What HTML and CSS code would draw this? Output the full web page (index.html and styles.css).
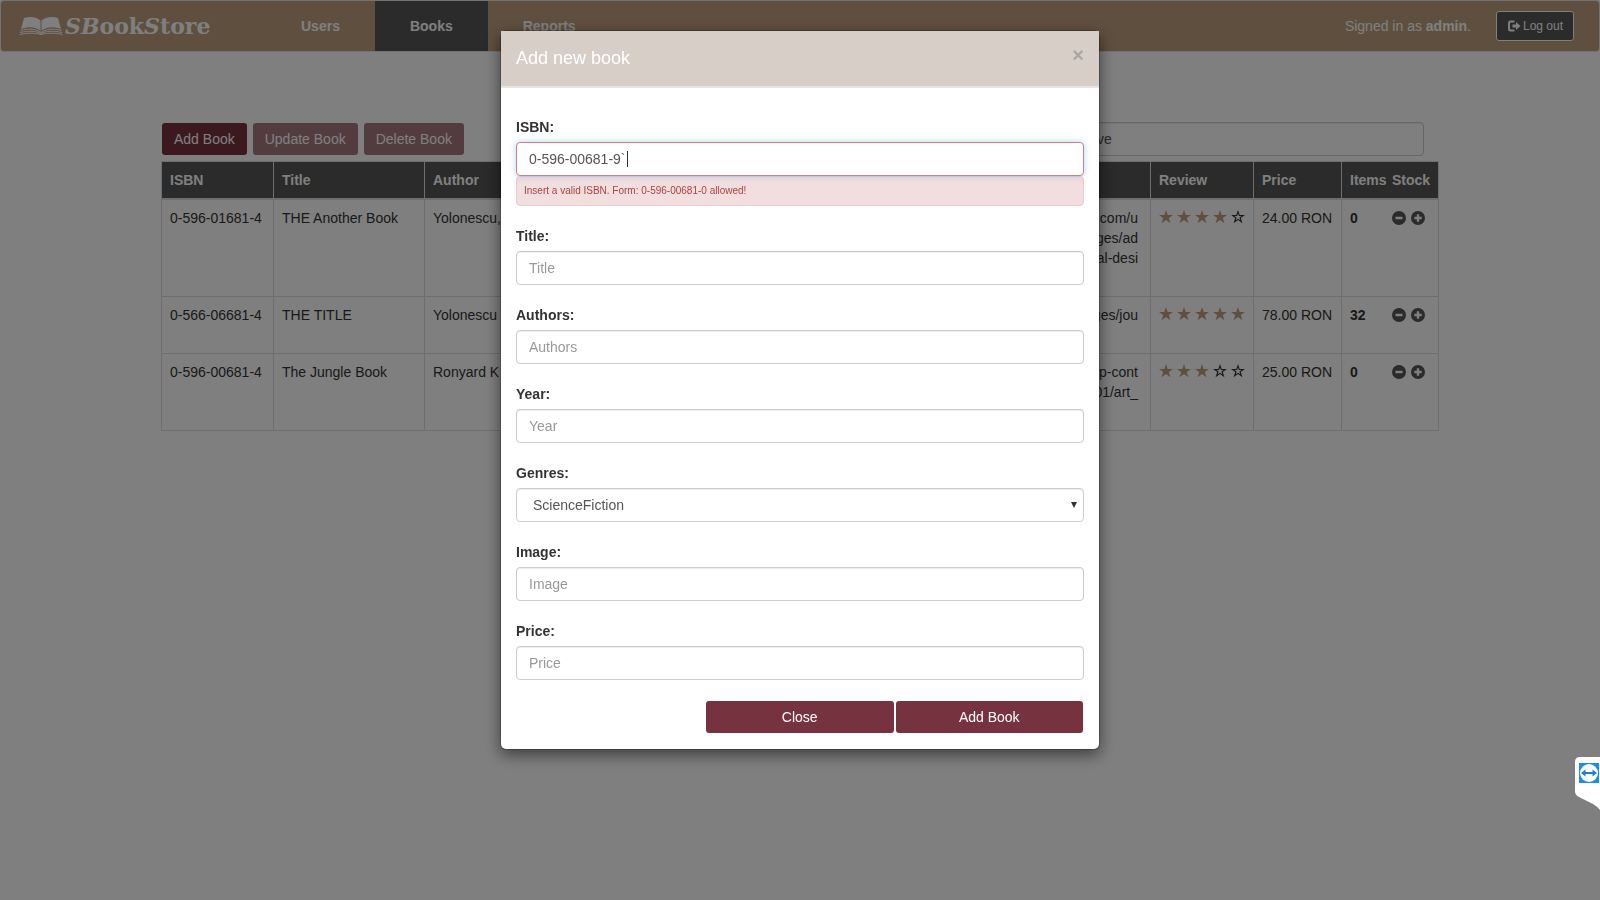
FILE: index.html
```html
<!DOCTYPE html>
<html lang="en">
<head>
<meta charset="utf-8">
<title>SBookStore</title>
<link rel="stylesheet" href="styles.css">
</head>
<body>
<svg class="defs" aria-hidden="true">
  <symbol id="star" viewBox="0 0 14 14"><path d="M7 0 8.700 4.900H14L9.800 8 11.400 13.200 7 10.100 2.600 13.200 4.200 8 0 4.900H5.300Z"/></symbol>
  <symbol id="star-empty" viewBox="0 0 14 14"><path fill-rule="evenodd" d="M7 0 8.700 4.900H14L9.800 8 11.400 13.200 7 10.100 2.600 13.200 4.200 8 0 4.900H5.300ZM7 3.400 6.100 6H3.400L5.600 7.600 4.800 10.300 7 8.700 9.200 10.300 8.400 7.600 10.600 6H7.900Z"/></symbol>
  <symbol id="minus" viewBox="0 0 14 14"><path fill-rule="evenodd" d="M7 0a7 7 0 1 0 0 14A7 7 0 0 0 7 0ZM3.5 5.7H10.5V8.3H3.5Z"/></symbol>
  <symbol id="plus" viewBox="0 0 14 14"><path fill-rule="evenodd" d="M7 0a7 7 0 1 0 0 14A7 7 0 0 0 7 0ZM5.8 3.3H8.2V5.8H10.7V8.2H8.2V10.7H5.8V8.2H3.3V5.8H5.8Z"/></symbol>
</svg>
<header class="navbar">
  <a class="brand" href="#">
    <svg class="brand-book" viewBox="0 0 44 20" aria-hidden="true">
      <path fill="#fff" d="M5 2C11 0 18 1 22 5 26 1 33 0 39 2L42 13C34 10 27 11 22 15 17 11 10 10 2 13Z"/>
      <path fill="none" stroke="#fff" stroke-width="1" d="M1.500 14.500C10 12 17 13 22 16.500 27 13 34 12 42.500 14.500M1 16.500C10 14.500 17 15 22 17.500 27 15 34 14.500 43 16.500M.5 18.500C9 16.500 17 17 22 18.500 27 17 35 16.500 43.500 18.500"/>
      <path stroke="#bf9f7f" stroke-width="1" d="M22 5V15"/>
    </svg>
    <span class="brand-name"><em>SB</em>ook<em>S</em>tore</span>
  </a>
  <nav class="tabs">
    <a class="tab" href="#">Users</a>
    <a class="tab active" href="#">Books</a>
    <a class="tab" href="#">Reports</a>
  </nav>
  <p class="signed">Signed in as <b>admin</b>.</p>
  <button class="logout" type="button">
    <svg viewBox="0 0 13 12" aria-hidden="true"><path fill="#fff" d="M7 .5H3Q.5.500.5 3V9Q.5 11.500 3 11.500H7V9.500H3.300Q2.500 9.500 2.500 8.700V3.300Q2.500 2.500 3.300 2.500H7ZM8.500 2 13 6 8.500 10V7.500H5V4.500H8.500Z"/></svg>
    <span>Log out</span>
  </button>
</header>

<main class="page">
  <div class="toolbar">
    <button class="btn" type="button">Add Book</button>
    <button class="btn" type="button" disabled>Update Book</button>
    <button class="btn" type="button" disabled>Delete Book</button>
    <input class="control search" type="text" value="ve" aria-label="Search">
  </div>
  <table class="books">
    <colgroup><col class="c-isbn"><col class="c-title"><col class="c-author"><col><col class="c-review"><col class="c-price"><col class="c-stock"></colgroup>
    <thead>
      <tr><th>ISBN</th><th>Title</th><th>Author</th><th></th><th>Review</th><th>Price</th><th><span class="stock"><span class="count">Items</span>Stock</span></th></tr>
    </thead>
    <tbody>
      <tr class="tall">
        <td>0-596-01681-4</td><td>THE Another Book</td><td>Yolonescu,</td><td class="url">.com/u<br>ges/ad<br>al-desi</td>
        <td><span class="stars" role="img" aria-label="4 of 5"><svg><use href="#star"/></svg><svg><use href="#star"/></svg><svg><use href="#star"/></svg><svg><use href="#star"/></svg><svg class="empty"><use href="#star-empty"/></svg></span></td>
        <td>24.00 RON</td>
        <td><span class="stock"><b class="count">0</b><button type="button" aria-label="Remove one"><svg><use href="#minus"/></svg></button><button type="button" aria-label="Add one"><svg><use href="#plus"/></svg></button></span></td>
      </tr>
      <tr class="short">
        <td>0-566-06681-4</td><td>THE TITLE</td><td>Yolonescu</td><td class="url">ges/jou</td>
        <td><span class="stars" role="img" aria-label="5 of 5"><svg><use href="#star"/></svg><svg><use href="#star"/></svg><svg><use href="#star"/></svg><svg><use href="#star"/></svg><svg><use href="#star"/></svg></span></td>
        <td>78.00 RON</td>
        <td><span class="stock"><b class="count">32</b><button type="button" aria-label="Remove one"><svg><use href="#minus"/></svg></button><button type="button" aria-label="Add one"><svg><use href="#plus"/></svg></button></span></td>
      </tr>
      <tr class="medium">
        <td>0-596-00681-4</td><td>The Jungle Book</td><td>Ronyard K</td><td class="url">wp-cont<br>01/art_</td>
        <td><span class="stars" role="img" aria-label="3 of 5"><svg><use href="#star"/></svg><svg><use href="#star"/></svg><svg><use href="#star"/></svg><svg class="empty"><use href="#star-empty"/></svg><svg class="empty"><use href="#star-empty"/></svg></span></td>
        <td>25.00 RON</td>
        <td><span class="stock"><b class="count">0</b><button type="button" aria-label="Remove one"><svg><use href="#minus"/></svg></button><button type="button" aria-label="Add one"><svg><use href="#plus"/></svg></button></span></td>
      </tr>
    </tbody>
  </table>
</main>

<div class="backdrop">
  <section class="modal" role="dialog" aria-labelledby="modal-title">
    <header class="modal-header">
      <h4 id="modal-title">Add new book</h4>
      <button class="close" type="button" aria-label="Close dialog">×</button>
    </header>
    <form class="modal-body">
      <div class="group">
        <label for="isbn">ISBN:</label>
        <div class="typed"><input class="control invalid" id="isbn" type="text" value="0-596-00681-9`"><span class="caret"></span></div>
        <p class="error">Insert a valid ISBN. Form: 0-596-00681-0 allowed!</p>
      </div>
      <div class="group"><label for="title">Title:</label><input class="control" id="title" type="text" placeholder="Title"></div>
      <div class="group"><label for="authors">Authors:</label><input class="control" id="authors" type="text" placeholder="Authors"></div>
      <div class="group"><label for="year">Year:</label><input class="control" id="year" type="text" placeholder="Year"></div>
      <div class="group"><label for="genres">Genres:</label>
        <div class="picker"><select class="control" id="genres"><option>ScienceFiction</option></select><svg viewBox="0 0 6 6" aria-hidden="true"><path d="M0 0H6L3 6Z"/></svg></div>
      </div>
      <div class="group"><label for="image">Image:</label><input class="control" id="image" type="text" placeholder="Image"></div>
      <div class="group"><label for="price">Price:</label><input class="control" id="price" type="text" placeholder="Price"></div>
      <div class="actions"><button class="btn" type="button">Close</button><button class="btn" type="button">Add Book</button></div>
    </form>
  </section>
</div>

<aside class="side-tab">
  <svg viewBox="0 0 25 54" aria-hidden="true">
    <path fill="#fff" d="M25 0H5Q0 0 0 5V34Q0 38 4 40L18 47Q23 50 25 53Z"/>
    <rect x="4" y="6" width="20" height="20" fill="#1a8cf0"/>
    <circle cx="14" cy="16" r="9" fill="#fff"/>
    <path fill="#1a7fe0" d="M6 16 10.500 12.500V15H17.500V12.500L22 16 17.500 19.500V17H10.500V19.500Z"/>
  </svg>
</aside>
</body>
</html>
```
FILE: styles.css
```css
* { box-sizing: border-box; }
body {
  margin: 0;
  background: #fff;
  color: #333;
  font: 14px/20px "Liberation Sans", Arial, sans-serif;
}
button, input, select { font: inherit; }
button { cursor: pointer; }
.defs { display: none; }

.navbar {
  display: flex;
  align-items: center;
  min-height: 52px;
  padding: 0 25px 0 18px;
  border: 1px solid #e7e7e7;
  border-radius: 4px;
  background: #bf9f7f;
  color: #fff;
}
.brand {
  display: flex;
  align-items: center;
  gap: 2px;
  width: 247px;
  color: #fff;
  text-decoration: none;
}
.brand-book { width: 44px; height: 20px; }
.brand-name { font: bold 22px/30px "DejaVu Serif", serif; }
.tabs { display: flex; flex: 1; }
.tab {
  padding: 15px 35px;
  color: #fff;
  font-weight: bold;
  text-decoration: none;
}
.tab.active { background: #565656; }
.signed { margin: 0 25px 0 0; }
.logout {
  display: flex;
  align-items: center;
  gap: 2px;
  height: 30px;
  padding: 0 10px;
  border: 1px solid #fff;
  border-radius: 3px;
  background: #565656;
  color: #fff;
  font-size: 12px;
}
.logout svg { width: 14px; height: 12px; }

.page { padding: 70px 161px 0; }
.toolbar {
  display: flex;
  align-items: center;
  gap: 6px;
  padding: 0 15px 5px 1px;
}
.btn {
  height: 32px;
  padding: 0 12px;
  border: 0;
  border-radius: 3px;
  background: #77323f;
  color: #fff;
}
.btn:disabled { opacity: .65; }
.control {
  display: block;
  width: 100%;
  height: 34px;
  padding: 6px 12px;
  border: 1px solid #ccc;
  border-radius: 4px;
  background: #fff;
  box-shadow: inset 0 1px 1px rgba(0, 0, 0, .075);
  color: #555;
  outline: 0;
}
.control::placeholder { color: #999; }
.search { width: 340px; margin-left: auto; }

.books {
  width: 100%;
  border-collapse: collapse;
  table-layout: fixed;
}
.books th, .books td {
  padding: 8px;
  border: 1px solid #ddd;
  text-align: left;
  vertical-align: top;
}
.books th {
  border-bottom-width: 2px;
  background: #565656;
  color: #fff;
}
.c-isbn { width: 112px; }
.c-title { width: 151px; }
.c-author { width: 150px; }
.c-review { width: 103px; }
.c-price { width: 88px; }
.c-stock { width: 97px; }
.tall { height: 97px; }
.short { height: 57px; }
.medium { height: 77px; }
.books .url { padding-right: 12px; text-align: right; }
.stars { display: flex; gap: 4px; padding-top: 2px; }
.stars svg { width: 14px; height: 14px; fill: #bf9f7f; }
.stars .empty { fill: #333; }
.stock { display: flex; align-items: center; }
.count { width: 42px; flex: none; }
.stock button {
  width: 14px;
  height: 14px;
  margin-right: 5px;
  padding: 0;
  border: 0;
  background: none;
}
.stock svg { display: block; width: 14px; height: 14px; fill: #565656; }

.backdrop {
  position: fixed;
  inset: 0;
  padding-top: 30px;
  background: rgba(0, 0, 0, .5);
}
.modal {
  width: 600px;
  margin: 0 auto;
  border: 1px solid rgba(0, 0, 0, .2);
  border-radius: 6px;
  background: #fff;
  background-clip: padding-box;
  box-shadow: 0 5px 15px rgba(0, 0, 0, .5);
}
.modal-header {
  display: flex;
  justify-content: space-between;
  padding: 15px;
  border-bottom: 2px solid #e5e5e5;
  background: #d7cec8;
  color: #fff;
}
.modal-header h4 { margin: 0; font-weight: normal; font-size: 18px; line-height: 25px; }
.close {
  height: 18px;
  padding: 0;
  border: 0;
  background: none;
  color: #000;
  font-size: 20px;
  font-weight: bold;
  line-height: 18px;
  opacity: .2;
}
.modal-body { padding: 29px 15px 16px; }
.group { margin-bottom: 20px; }
.group label { display: block; margin-bottom: 5px; font-weight: bold; }
.typed, .picker { position: relative; }
.invalid { border-color: #d08080; box-shadow: 0 0 6px rgba(102, 175, 233, .5); }
.caret {
  position: absolute;
  left: 111px;
  top: 9px;
  width: 1px;
  height: 16px;
  background: #333;
}
.error {
  margin: 0;
  padding: 4px 7px;
  border: 1px solid #ebccd1;
  border-radius: 4px;
  background: #f2dede;
  color: #a94442;
  font-size: 10px;
}
.picker select { appearance: none; padding-left: 16px; }
.picker svg { position: absolute; right: 7px; top: 14px; width: 6px; height: 6px; fill: #333; }
.actions { display: flex; gap: 2px; width: 378px; margin-left: auto; padding-top: 1px; padding-right: 1px; }
.actions .btn { flex: 1; }

.side-tab { position: fixed; right: 0; top: 757px; width: 25px; height: 54px; }
.side-tab svg { display: block; width: 25px; height: 54px; }
```
